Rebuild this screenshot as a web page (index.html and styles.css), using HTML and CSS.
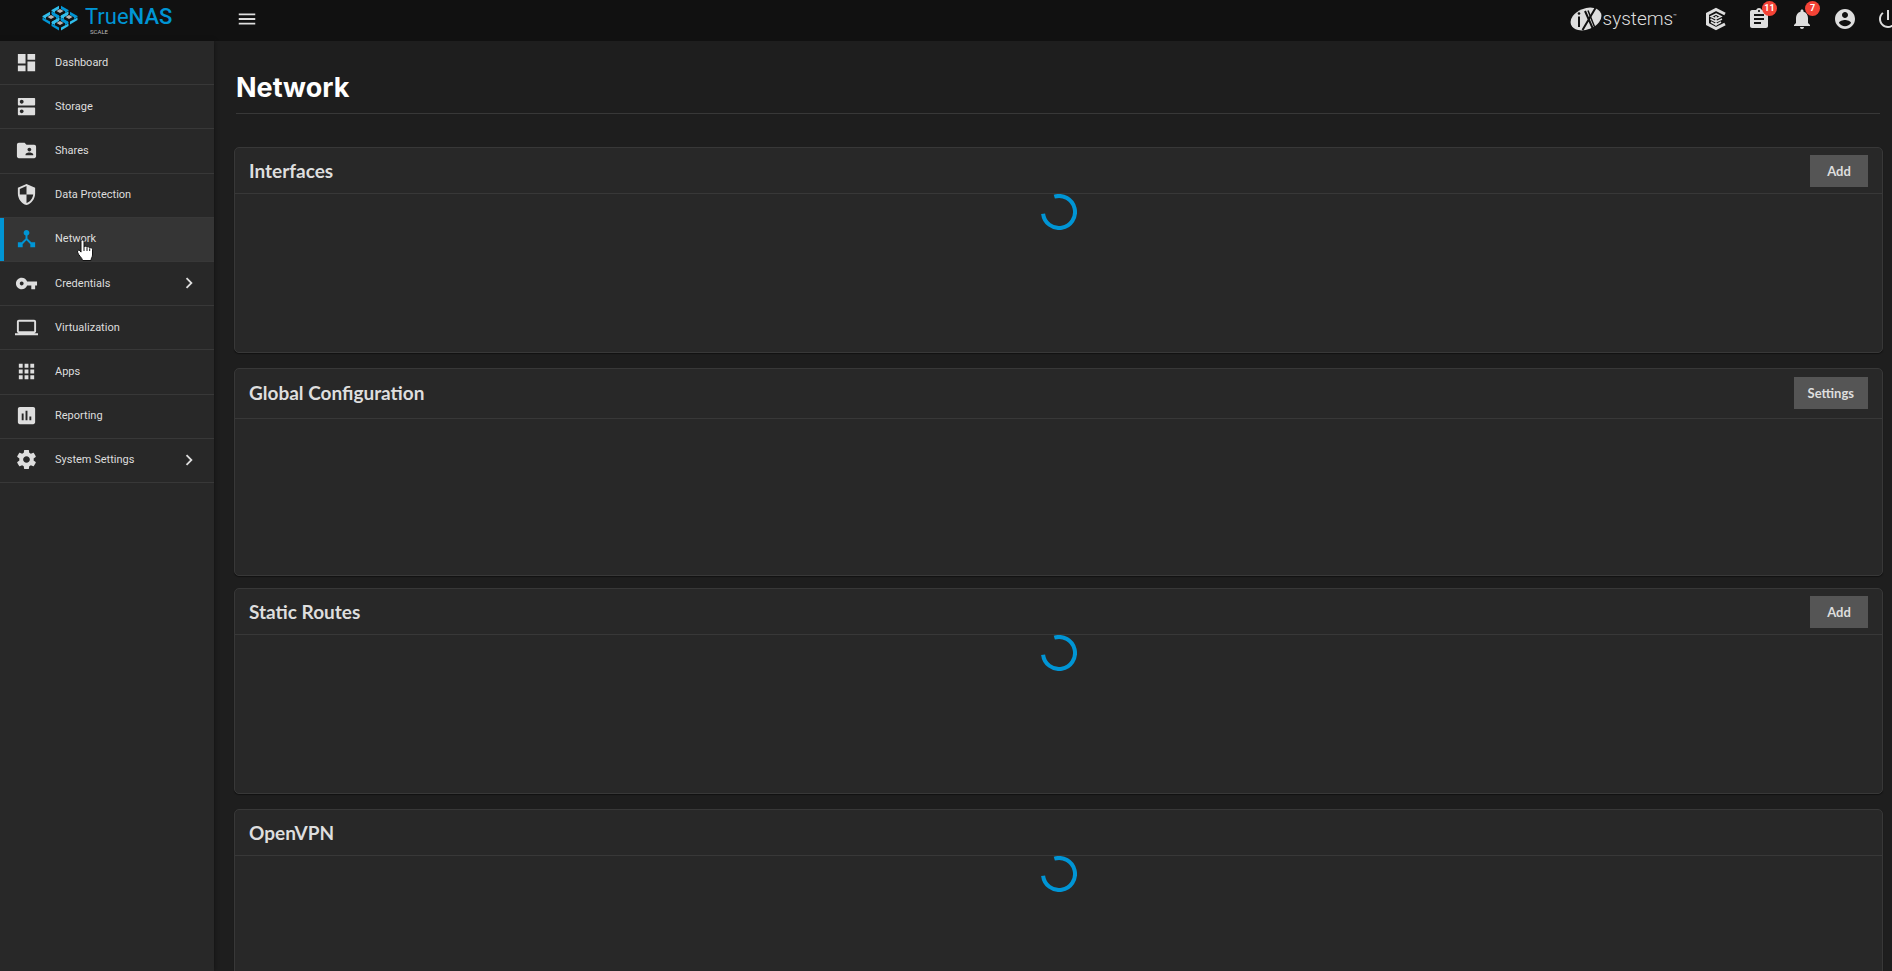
FILE: index.html
```html
<!DOCTYPE html>
<html lang="en">
<head>
<meta charset="utf-8">
<title>TrueNAS - Network</title>
<link rel="stylesheet" href="styles.css">
</head>
<body>
<header class="topbar">
  <a class="brand" href="#" aria-label="TrueNAS Scale">
    <svg class="brand-mark" viewBox="0 0 36 26" aria-hidden="true">
      <defs>
        <g id="tile">
          <path fill="#31beec" d="M-8.500 0-1-4.300V-1L-5 1.200v1.800l-3.500-2z"/>
          <path fill="#0095d5" d="M1-4.300 8.500 0v1L5 3V1.200L1-1z"/>
          <path fill="#0095d5" d="M-8.500 1.500-1 5.500v3L-8.500 4z"/>
          <path fill="#31beec" d="M8.500 1.500 1 5.500v3L8.500 4z"/>
          <path fill="#b4b4b4" d="m0-1 3.500 2L0 3l-3.500-2z"/>
        </g>
      </defs>
      <use href="#tile" x="18" y="5"/>
      <use href="#tile" x="9" y="11"/>
      <use href="#tile" x="27" y="11"/>
      <use href="#tile" x="18" y="17"/>
    </svg>
    <span class="brand-text"><span class="brand-name">True<b>NAS</b></span><span class="brand-edition">SCALE</span></span>
  </a>
  <button class="icon-button menu-button" type="button" aria-label="Toggle menu"><svg viewBox="0 0 24 24"><path d="M3 18h18v-2H3zm0-5h18v-2H3zm0-7v2h18V6z"/></svg></button>
  <div class="tools">
    <a class="ix" href="#" aria-label="iXsystems">
      <svg class="ix-mark" viewBox="0 0 32 24" aria-hidden="true">
        <ellipse cx="16" cy="12" rx="16" ry="10.500" transform="rotate(-21 16 12)" fill="#dedede"/>
        <path d="M9 9.500V20M15 4l8 18M25.500 1 12.500 23" stroke="#111" stroke-width="2" fill="none"/>
        <path d="M18 3.500 25 21" stroke="#111" stroke-width="1.500"/>
        <circle cx="9" cy="6.500" r="1.300" fill="#111"/>
      </svg>
      <span class="ix-name">systems</span><span class="ix-tm">™</span>
    </a>
    <button class="icon-button" type="button" aria-label="TrueCommand"><svg viewBox="0 0 24 24"><path fill="none" stroke="currentColor" stroke-width="3" d="M21 7 12 2.500 3.500 7v10l8.500 4.500L21 17"/><path fill="none" stroke="currentColor" stroke-width="1.500" d="m12 7 5 2.500-5 2.500-5-2.500zM12 9v10M6.500 12l5.500 3 6-3M7 15l5 3 5-3"/></svg></button>
    <button class="icon-button" type="button" aria-label="Jobs"><svg viewBox="0 0 24 24"><path d="M19 3h-4.180C14.400 1.840 13.300 1 12 1s-2.400.84-2.820 2H5c-1.100 0-2 .9-2 2v14c0 1.100.9 2 2 2h14c1.100 0 2-.9 2-2V5c0-1.100-.9-2-2-2zm-7 0c.55 0 1 .45 1 1s-.45 1-1 1-1-.45-1-1 .45-1 1-1zm2 14H7v-2h7zm3-4H7v-2h10zm0-4H7V7h10z"/></svg><span class="badge">11</span></button>
    <button class="icon-button" type="button" aria-label="Alerts"><svg viewBox="0 0 24 24"><path d="M12 22c1.100 0 2-.9 2-2h-4c0 1.100.89 2 2 2zm6-6v-5c0-3.070-1.640-5.640-4.500-6.320V4c0-.83-.67-1.500-1.500-1.500s-1.500.67-1.500 1.500v.68C7.630 5.360 6 7.920 6 11v5l-2 2v1h16v-1z"/></svg><span class="badge">7</span></button>
    <button class="icon-button" type="button" aria-label="Account"><svg viewBox="0 0 24 24"><path d="M12 2C6.480 2 2 6.480 2 12s4.480 10 10 10 10-4.480 10-10S17.520 2 12 2zm0 3c1.660 0 3 1.340 3 3s-1.340 3-3 3-3-1.340-3-3 1.340-3 3-3zm0 14.200c-2.500 0-4.710-1.280-6-3.220.03-1.990 4-3.080 6-3.080 1.990 0 5.970 1.090 6 3.080-1.290 1.940-3.500 3.220-6 3.220z"/></svg></button>
    <button class="icon-button" type="button" aria-label="Power"><svg viewBox="0 0 24 24"><path d="M13 3h-2v10h2zm4.830 2.170-1.420 1.420C17.990 7.860 19 9.810 19 12c0 3.870-3.130 7-7 7s-7-3.130-7-7c0-2.190 1.010-4.140 2.580-5.420L6.170 5.170C4.230 6.820 3 9.260 3 12c0 4.970 4.030 9 9 9s9-4.030 9-9c0-2.740-1.230-5.180-3.170-6.830z"/></svg></button>
  </div>
</header>
<div class="shell">
  <nav class="sidebar" aria-label="Main">
    <div class="nav-list">
    <a class="nav-item" href="#"><svg viewBox="0 0 24 24"><path d="M3 13h8V3H3zm0 8h8v-6H3zm10 0h8V11h-8zm0-18v6h8V3z"/></svg><span>Dashboard</span></a>
    <a class="nav-item" href="#"><svg viewBox="0 0 24 24"><path d="M20 13H4c-.55 0-1 .45-1 1v6c0 .55.45 1 1 1h16c.55 0 1-.45 1-1v-6c0-.55-.45-1-1-1zM7 19c-1.100 0-2-.9-2-2s.9-2 2-2 2 .9 2 2-.9 2-2 2zM20 3H4c-.55 0-1 .45-1 1v6c0 .55.45 1 1 1h16c.55 0 1-.45 1-1V4c0-.55-.45-1-1-1zM7 9c-1.100 0-2-.9-2-2s.9-2 2-2 2 .9 2 2-.9 2-2 2z"/></svg><span>Storage</span></a>
    <a class="nav-item" href="#"><svg viewBox="0 0 24 24"><path d="M20 6h-8l-2-2H4c-1.100 0-1.990.9-1.990 2L2 18c0 1.100.9 2 2 2h16c1.100 0 2-.9 2-2V8c0-1.100-.9-2-2-2zm-5 3c1.100 0 2 .9 2 2s-.9 2-2 2-2-.9-2-2 .9-2 2-2zm4 8h-8v-1c0-1.330 2.670-2 4-2s4 .67 4 2z"/></svg><span>Shares</span></a>
    <a class="nav-item" href="#"><svg viewBox="0 0 24 24"><path d="M12 1 3 5v6c0 5.550 3.840 10.740 9 12 5.160-1.260 9-6.450 9-12V5zm0 10.990h7c-.53 4.120-3.280 7.790-7 8.940V12H5V6.300l7-3.110z"/></svg><span>Data Protection</span></a>
    <a class="nav-item active" href="#" aria-current="page"><svg viewBox="0 0 24 24"><path d="m17 16-4-4V8.820C14.160 8.400 15 7.300 15 6c0-1.660-1.340-3-3-3S9 4.340 9 6c0 1.300.84 2.400 2 2.820V12l-4 4H3v5h5v-3.050l4-4.200 4 4.200V21h5v-5z"/></svg><span>Network</span></a>
    <a class="nav-item" href="#"><svg viewBox="0 0 24 24"><path d="M12.650 10C11.830 7.670 9.610 6 7 6c-3.310 0-6 2.690-6 6s2.690 6 6 6c2.610 0 4.830-1.670 5.650-4H17v4h4v-4h2v-4zM7 14c-1.100 0-2-.9-2-2s.9-2 2-2 2 .9 2 2-.9 2-2 2z"/></svg><span>Credentials</span><svg class="chevron" viewBox="0 0 24 24"><path d="M10 6 8.590 7.410 13.170 12l-4.580 4.590L10 18l6-6z"/></svg></a>
    <a class="nav-item" href="#"><svg viewBox="0 0 24 24"><path d="M20 18c1.100 0 1.990-.9 1.990-2L22 6c0-1.100-.9-2-2-2H4c-1.100 0-2 .9-2 2v10c0 1.100.9 2 2 2H0v2h24v-2zM4 6h16v10H4z"/></svg><span>Virtualization</span></a>
    <a class="nav-item" href="#"><svg viewBox="0 0 24 24"><path d="M4 8h4V4H4zm6 12h4v-4h-4zm-6 0h4v-4H4zm0-6h4v-4H4zm6 0h4v-4h-4zm6-10v4h4V4zm-6 4h4V4h-4zm6 6h4v-4h-4zm0 6h4v-4h-4z"/></svg><span>Apps</span></a>
    <a class="nav-item" href="#"><svg viewBox="0 0 24 24"><path d="M19 3H5c-1.100 0-2 .9-2 2v14c0 1.100.9 2 2 2h14c1.100 0 2-.9 2-2V5c0-1.100-.9-2-2-2zM9 17H7v-7h2zm4 0h-2V7h2zm4 0h-2v-4h2z"/></svg><span>Reporting</span></a>
    <a class="nav-item" href="#"><svg viewBox="0 0 24 24"><path d="M19.430 12.980c.04-.32.07-.64.07-.98s-.03-.66-.07-.98l2.110-1.650c.19-.15.24-.42.12-.64l-2-3.460c-.12-.22-.39-.3-.61-.22l-2.490 1c-.52-.4-1.080-.73-1.690-.98l-.38-2.650C14.460 2.180 14.250 2 14 2h-4c-.25 0-.46.18-.49.42l-.38 2.650c-.61.25-1.170.59-1.690.98l-2.490-1c-.23-.09-.49 0-.61.22l-2 3.460c-.13.22-.07.49.12.64l2.110 1.650c-.04.32-.07.65-.07.98s.03.66.07.98l-2.110 1.650c-.19.15-.24.42-.12.64l2 3.460c.12.22.39.3.61.22l2.490-1c.52.4 1.080.73 1.690.98l.38 2.650c.03.24.24.42.49.42h4c.25 0 .46-.18.49-.42l.38-2.650c.61-.25 1.170-.59 1.690-.98l2.490 1c.23.09.49 0 .61-.22l2-3.460c.12-.22.07-.49-.12-.64zM12 15.500c-1.930 0-3.500-1.570-3.500-3.500s1.570-3.500 3.500-3.500 3.500 1.570 3.500 3.500-1.570 3.500-3.500 3.500z"/></svg><span>System Settings</span><svg class="chevron" viewBox="0 0 24 24"><path d="M10 6 8.590 7.410 13.170 12l-4.580 4.590L10 18l6-6z"/></svg></a>
    </div>
  </nav>
  <main class="content">
    <h1 class="page-title">Network</h1>
    <div class="cards">
      <section class="card">
        <div class="card-head"><h2>Interfaces</h2><button class="action" type="button">Add</button></div>
        <div class="card-body"><svg class="spinner" viewBox="0 0 36 36" role="img" aria-label="Loading"><path d="M13.300 2.700A16 16 0 1 1 2.100 19.700"/></svg></div>
      </section>
      <section class="card card-config">
        <div class="card-head"><h2>Global Configuration</h2><button class="action" type="button">Settings</button></div>
        <div class="card-body"></div>
      </section>
      <section class="card">
        <div class="card-head"><h2>Static Routes</h2><button class="action" type="button">Add</button></div>
        <div class="card-body"><svg class="spinner" viewBox="0 0 36 36" role="img" aria-label="Loading"><path d="M13.300 2.700A16 16 0 1 1 2.100 19.700"/></svg></div>
      </section>
      <section class="card">
        <div class="card-head"><h2>OpenVPN</h2></div>
        <div class="card-body"><svg class="spinner" viewBox="0 0 36 36" role="img" aria-label="Loading"><path d="M13.300 2.700A16 16 0 1 1 2.100 19.700"/></svg></div>
      </section>
    </div>
  </main>
</div>
<svg class="pointer" viewBox="0 0 18 24" aria-hidden="true"><path d="M5 2.500C5 .5 8 .5 8 2.500V8c.5-1.300 2.700-1 2.900.4.700-1 2.600-.7 2.800.7.900-.8 2.800-.3 2.800 1.300V16c0 2-1.500 3-1.500 5.500H6.500C6.500 19 2 16 1.500 13c-.2-1.800 1.600-2.300 2.500-1.200l1 1.300z" fill="#fff" stroke="#111" stroke-width="1"/><path d="M8 8v4M11 9v3M13.700 9.500V12" stroke="#111" stroke-width="1"/></svg>
</body>
</html>
```
FILE: styles.css
```css
* { box-sizing: border-box; }

body {
  margin: 0;
  height: 100vh;
  display: flex;
  flex-direction: column;
  overflow: hidden;
  background: #1e1e1e;
  color: #dedede;
  font-family: Roboto, "Liberation Sans", sans-serif;
}

a { color: inherit; text-decoration: none; }
button { border: 0; padding: 0; font: inherit; color: inherit; }
svg { fill: currentColor; flex: none; }

.topbar {
  display: flex;
  align-items: center;
  flex: none;
  height: 41px;
  padding-bottom: 3px;
  background: #111;
}

.brand {
  display: flex;
  align-self: flex-start;
  gap: 7px;
  width: 214px;
  padding: 5px 0 0 42px;
}
.brand-mark { width: 36px; height: 26px; }
.brand-text { display: flex; flex-direction: column; color: #0095d5; }
.brand-name { font-size: 22px; line-height: 24px; }
.brand-name b { font-weight: 500; }
.brand-edition { padding-left: 5px; font-size: 6px; line-height: 6px; color: #bbb; }

.icon-button {
  position: relative;
  display: flex;
  align-items: center;
  justify-content: center;
  flex: none;
  width: 24px;
  height: 24px;
  background: none;
}
.icon-button svg { width: 24px; height: 24px; }
.menu-button { margin-left: 21px; }
.menu-button svg, .nav-item svg { width: 22px; height: 22px; }

.tools {
  display: flex;
  align-items: center;
  gap: 19px;
  margin: 0 -8px 0 auto;
}
.ix { display: flex; align-items: center; margin-right: 8px; }
.ix-mark { width: 32px; height: 24px; margin-right: 1px; }
.ix-name { font-size: 19px; font-weight: 300; line-height: 24px; }
.ix-tm { align-self: flex-start; padding-top: 5px; font-size: 6px; }

.badge {
  position: absolute;
  top: -6px;
  right: -6px;
  width: 15px;
  height: 15px;
  border-radius: 50%;
  background: #f44336;
  color: #fff;
  font-size: 9px;
  font-weight: 700;
  line-height: 15px;
  text-align: center;
}

.shell { display: flex; flex: 1; min-height: 0; }

.sidebar {
  flex: none;
  width: 214px;
  background: #282828;
  box-shadow: 0 0 4px #111;
}
.nav-list {
  display: grid;
  grid-auto-rows: 1fr;
  min-height: 442px;
}
.nav-item {
  display: flex;
  align-items: center;
  gap: 17px;
  padding: 0 14px 1px 15px;
  border-bottom: 1px solid #383838;
  font-size: 11px;
  font-weight: 400;
}
.nav-item svg:first-child { width: 23px; height: 23px; }
.nav-item .chevron { margin-left: auto; }
.nav-item.active { background: #353535; box-shadow: inset 4px 0 #0095d5; }
.nav-item.active svg { color: #0095d5; }

.content { flex: 1; min-width: 0; padding: 27px 9px 0 20px; }

.page-title {
  margin: 0 3px 33px 2px;
  padding-bottom: 6px;
  border-bottom: 1px solid #383838;
  color: #fff;
  font: 700 27px/39px Inter, sans-serif;
}

.card {
  margin-bottom: 15px;
  border: 1px solid #383838;
  border-radius: 5px;
  background: #282828;
  box-shadow: 0 1px 1px #111;
}
.card-head {
  display: flex;
  align-items: center;
  justify-content: space-between;
  min-height: 46px;
  padding: 7px 14px 6px;
  border-bottom: 1px solid #383838;
}
.card-head h2 { margin: 0; font: 700 19px/24px Lato, sans-serif; }
.card-body { display: flex; justify-content: center; min-height: 158px; }

.card-config { margin-bottom: 12px; }
.card-config .card-head { padding: 8px 14px 9px; }
.card-config .card-body { min-height: 156px; }

.action {
  height: 32px;
  padding: 0 14px;
  min-width: 58px;
  background: #555;
  font: 700 13px/16px Lato, sans-serif;
}

.spinner { width: 36px; height: 36px; }
.spinner path { fill: none; stroke: #0095d5; stroke-width: 4; }

.pointer { position: absolute; left: 76px; top: 239px; width: 18px; height: 24px; }
```
